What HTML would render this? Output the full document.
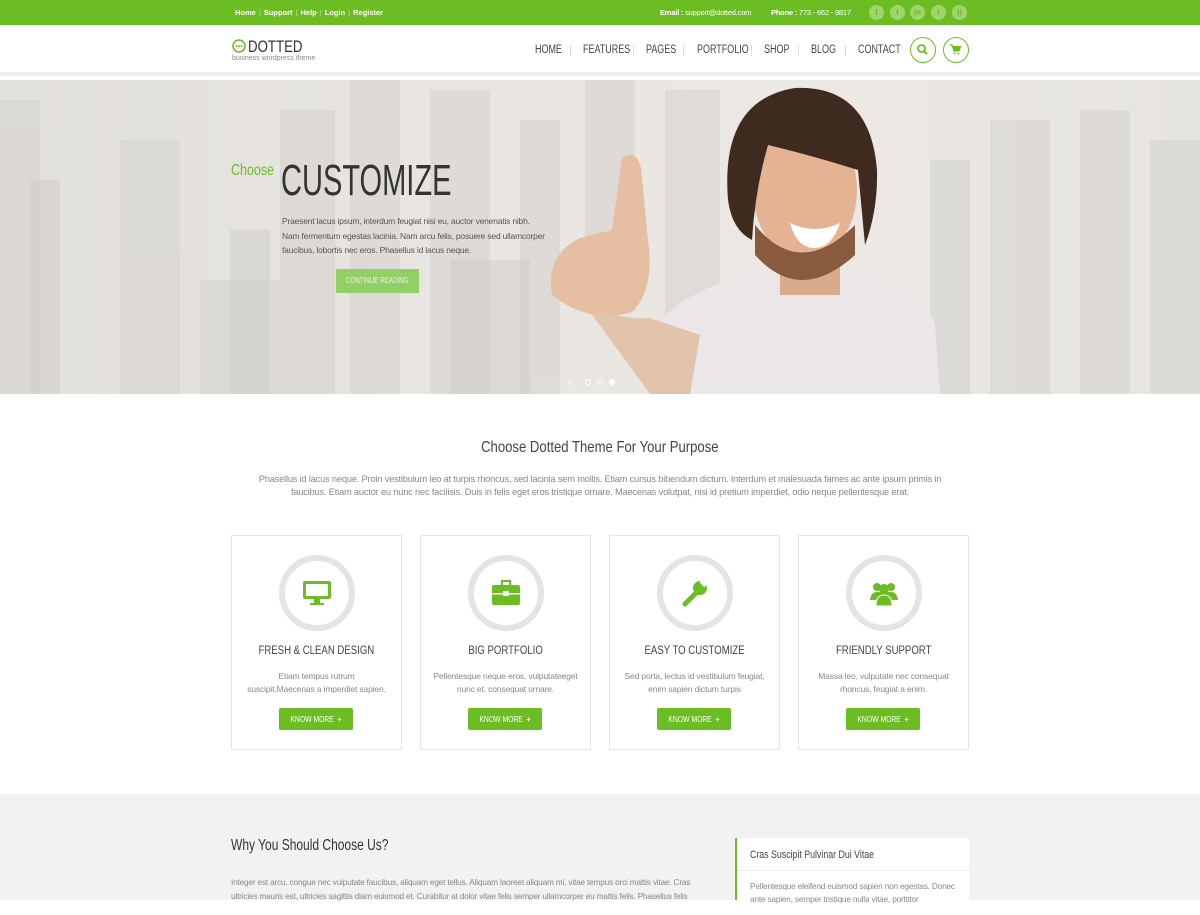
<!DOCTYPE html>
<html><head><meta charset="utf-8"><style>
*{margin:0;padding:0;box-sizing:border-box}
body{width:1200px;height:900px;overflow:hidden;background:#fff;font-family:"Liberation Sans",sans-serif;color:#777}
.top{height:25px;background:#6cbd23;color:#fff;font-size:7.5px;font-weight:bold;position:relative}
.top .l{position:absolute;left:235px;top:8px}
.top .l span{color:#b7e08f;margin:0 3px;font-weight:normal}
.top .r{position:absolute;top:8px;white-space:nowrap;letter-spacing:-0.2px}
.soc{position:absolute;top:5px;width:15px;height:15px;border-radius:50%;background:#9fd56b;color:#6cbd23;font-size:8px;text-align:center;line-height:15px}
.hdr{height:51px;position:relative;border-bottom:4px solid #eeeeee}
.logo{position:absolute;left:232px;top:12px}
.logo b{font-size:17px;color:#333;font-weight:normal;transform:scaleX(.78);display:inline-block;transform-origin:left;margin-left:2px}
.nv{position:absolute;top:19px;font-size:11.5px;color:#444;white-space:nowrap;transform:scaleX(.78);transform-origin:left}
.sep{position:absolute;top:20px;width:1px;height:11px;background:#ddd}
.cbtn{position:absolute;top:12px;width:26px;height:26px;border:1.5px solid #6cbd23;border-radius:50%}
.hero{position:absolute;top:80px;left:0;width:1200px;height:314px;overflow:hidden;background:linear-gradient(90deg,#e2e0dc,#e9e6e2 40%,#ece8e3 70%,#e6e4e1)}
.sec{position:absolute}
.card{position:absolute;top:535px;width:171px;height:215px;border:1px solid #e6e6e6;text-align:center}
.circ{position:absolute;left:47px;top:19px;width:76px;height:76px;border:6px solid #e4e4e4;border-radius:50%}
.card h4{position:absolute;top:107px;width:100%;font-weight:normal;font-size:12px;color:#444}
.card h4 span{display:inline-block;transform:scaleX(.8);white-space:nowrap}
.card p{position:absolute;top:134px;left:12px;right:12px;font-size:8.5px;line-height:13px;color:#888;letter-spacing:-0.15px}
.kb{position:absolute;left:47px;top:172px;width:74px;height:22px;background:#6cbd23;border-radius:2px;color:#fff;font-size:8.5px;line-height:22px;white-space:nowrap}
.kb span{display:inline-block;transform:scaleX(.8)}
</style></head><body>
<div class="top">
<div class="l">Home<span>|</span>Support<span>|</span>Help<span>|</span>Login<span>|</span>Register</div>
<div class="r" style="left:660px">Email : <span style="font-weight:normal">support@dotted.com</span></div>
<div class="r" style="left:771px">Phone : <span style="font-weight:normal">773 - 662 - 9817</span></div>
<div class="soc" style="left:869px">f</div><div class="soc" style="left:890px">t</div><div class="soc" style="left:910px">in</div><div class="soc" style="left:931px">t</div><div class="soc" style="left:952px">))</div>
</div>
<div class="hdr">
<div class="logo"><svg width="14" height="14" style="vertical-align:-1px"><circle cx="7" cy="7" r="6" fill="none" stroke="#6cbd23" stroke-width="1.6"/><circle cx="4.5" cy="7" r="1" fill="#6cbd23"/><circle cx="7" cy="7" r="1" fill="#6cbd23"/><circle cx="9.5" cy="7" r="1" fill="#6cbd23"/></svg><b>DOTTED</b><div style="font-size:7px;color:#888;margin-top:-2px">business wordpress theme</div></div>
<div class="nv" style="left:535px">HOME</div><div class="sep" style="left:570px"></div>
<div class="nv" style="left:583px">FEATURES</div><div class="sep" style="left:633px"></div>
<div class="nv" style="left:646px">PAGES</div><div class="sep" style="left:683px"></div>
<div class="nv" style="left:697px">PORTFOLIO</div><div class="sep" style="left:751px"></div>
<div class="nv" style="left:764px">SHOP</div><div class="sep" style="left:798px"></div>
<div class="nv" style="left:811px">BLOG</div><div class="sep" style="left:845px"></div>
<div class="nv" style="left:858px">CONTACT</div>
<div class="cbtn" style="left:910px"><svg width="23" height="23"><circle cx="10.5" cy="10.5" r="3.5" fill="none" stroke="#6cbd23" stroke-width="1.8"/><path d="M13 13l3 3" stroke="#6cbd23" stroke-width="2"/></svg></div>
<div class="cbtn" style="left:943px"><svg width="23" height="23"><path d="M6 7h2l2 6h5l1.5-4.5H9" fill="#6cbd23" stroke="#6cbd23" stroke-width="1.2"/><circle cx="10.5" cy="15.5" r="1" fill="#6cbd23"/><circle cx="14.5" cy="15.5" r="1" fill="#6cbd23"/></svg></div>
</div>
<div class="hero">
<svg width="1200" height="314" style="position:absolute;left:0;top:0">
<g fill="#d6d3cf" opacity=".55">
<rect x="0" y="20" width="40" height="294"/><rect x="120" y="60" width="60" height="254"/><rect x="280" y="30" width="55" height="284"/><rect x="350" y="0" width="50" height="314"/><rect x="430" y="10" width="60" height="304"/><rect x="520" y="40" width="40" height="274"/><rect x="585" y="0" width="50" height="200"/><rect x="665" y="10" width="55" height="230"/><rect x="990" y="40" width="60" height="274"/><rect x="1080" y="30" width="50" height="284"/><rect x="1150" y="60" width="50" height="254"/><rect x="200" y="200" width="90" height="114"/></g>
<g fill="#ccc9c5" opacity=".45"><rect x="30" y="100" width="30" height="214"/><rect x="230" y="150" width="40" height="164"/><rect x="450" y="180" width="80" height="134"/><rect x="930" y="80" width="40" height="234"/></g>
<path d="M655 314 L665 235 Q700 205 750 195 L865 195 Q925 210 935 245 L940 314Z" fill="#ebe6e8"/>
<path d="M585 225 Q620 240 650 238 L700 255 L690 314 L650 314Z" fill="#e2c4ad"/>
<path d="M552 215 Q545 175 580 158 L612 150 L622 78 Q636 68 641 88 L648 160 Q655 210 632 232 Q590 245 552 215Z" fill="#e6bea1"/>
<rect x="780" y="170" width="60" height="45" fill="#d9ab8c"/>
<ellipse cx="805" cy="110" rx="52" ry="70" fill="#e3b393"/>
<path d="M755 145 Q800 200 855 145 L855 175 Q800 225 755 175Z" fill="#8a5a3e"/>
<path d="M728 120 Q720 20 795 8 Q870 5 877 90 Q878 130 865 165 L858 90 Q810 75 768 65 Q755 110 752 160 Q732 150 728 120Z" fill="#3f2a1f"/>
<path d="M790 143 Q815 155 840 143 Q832 168 814 168 Q797 168 790 143Z" fill="#fff"/>
<text x="568" y="306" font-size="11" fill="#fff">›</text>
<circle cx="588" cy="302" r="2.5" fill="none" stroke="#fff"/><circle cx="600" cy="302" r="2.5" fill="none" stroke="#fff"/><circle cx="612" cy="302" r="2.5" fill="#fff" stroke="#fff"/>
</svg>
<div class="sec" style="left:231px;top:82px;font-size:16px;color:#6cbd23;transform:scaleX(.78);transform-origin:left">Choose</div>
<div class="sec" style="left:281px;top:76px;font-size:44px;color:#333;transform:scaleX(.66);transform-origin:left;white-space:nowrap">CUSTOMIZE</div>
<div class="sec" style="left:282px;top:134px;font-size:8.5px;line-height:14.5px;color:#555;width:265px;letter-spacing:-0.2px">Praesent lacus ipsum, interdum feugiat nisi eu, auctor venenatis nibh. Nam fermentum egestas lacinia. Nam arcu felis, posuere sed ullamcorper faucibus, lobortis nec eros. Phasellus id lacus neque.</div>
<div class="sec" style="left:336px;top:189px;width:83px;height:24px;background:#93cf66;color:#e9f6dd;font-size:8px;text-align:center;line-height:24px;white-space:nowrap"><span style="display:inline-block;transform:scaleX(.78)">CONTINUE READING</span></div>
</div>
<div class="sec" style="left:0;width:1200px;top:439px;text-align:center;font-size:16px;color:#444"><span style="display:inline-block;transform:scaleX(.82)">Choose Dotted Theme For Your Purpose</span></div>
<div class="sec" style="left:240px;width:720px;top:473px;text-align:center;font-size:9.3px;line-height:13px;color:#888;letter-spacing:-0.2px">Phasellus id lacus neque. Proin vestibulum leo at turpis rhoncus, sed lacinia sem mollis. Etiam cursus bibendum dictum. Interdum et malesuada fames ac ante ipsum primis in faucibus. Etiam auctor eu nunc nec facilisis. Duis in felis eget eros tristique ornare. Maecenas volutpat, nisi id pretium imperdiet, odio neque pellentesque erat.</div>

<div class="card" style="left:231px"><div class="circ"></div><svg style="position:absolute;left:70px;top:42px" width="30" height="30"><rect x="1" y="3" width="28" height="18" rx="2" fill="#6cbd23"/><rect x="4" y="6" width="22" height="12" fill="#fff"/><rect x="12" y="21" width="6" height="4" fill="#6cbd23"/><rect x="8" y="25" width="14" height="2" fill="#6cbd23"/></svg><h4><span>FRESH &amp; CLEAN DESIGN</span></h4><p>Etiam tempus rutrum suscipit.Maecenas a imperdiet sapien.</p><div class="kb"><span>KNOW MORE &nbsp;<b>+</b></span></div></div>
<div class="card" style="left:420px"><div class="circ"></div><svg style="position:absolute;left:70px;top:42px" width="30" height="30"><rect x="11" y="3" width="8" height="5" fill="none" stroke="#6cbd23" stroke-width="2"/><rect x="1" y="7" width="28" height="20" rx="2" fill="#6cbd23"/><rect x="1" y="15" width="28" height="1.5" fill="#fff"/><rect x="12" y="13" width="6" height="5" fill="#fff"/></svg><h4><span>BIG PORTFOLIO</span></h4><p>Pellentesque neque eros, vulputateeget nunc et, consequat ornare.</p><div class="kb"><span>KNOW MORE &nbsp;<b>+</b></span></div></div>
<div class="card" style="left:609px"><div class="circ"></div><svg style="position:absolute;left:70px;top:42px" width="30" height="30"><path d="M5 26 L17 14" stroke="#6cbd23" stroke-width="5" stroke-linecap="round"/><circle cx="20" cy="10" r="7" fill="#6cbd23"/><rect x="20" y="2" width="7" height="5" fill="#fff" transform="rotate(45 23 5)"/></svg><h4><span>EASY TO CUSTOMIZE</span></h4><p>Sed porta, lectus id vestibulum feugiat, enim sapien dictum turpis</p><div class="kb"><span>KNOW MORE &nbsp;<b>+</b></span></div></div>
<div class="card" style="left:798px"><div class="circ"></div><svg style="position:absolute;left:70px;top:42px" width="30" height="30"><circle cx="8" cy="9" r="4" fill="#6cbd23"/><circle cx="22" cy="9" r="4" fill="#6cbd23"/><circle cx="15" cy="11" r="5" fill="#6cbd23"/><path d="M1 22 Q2 14 8 14 L22 14 Q28 14 29 22Z" fill="#6cbd23"/><path d="M7 28 Q7 17 15 17 Q23 17 23 28Z" fill="#6cbd23" stroke="#fff"/></svg><h4><span>FRIENDLY SUPPORT</span></h4><p>Massa leo, vulputate nec consequat rhoncus, feugiat a enim.</p><div class="kb"><span>KNOW MORE &nbsp;<b>+</b></span></div></div>

<div class="sec" style="left:0;top:794px;width:1200px;height:106px;background:#f2f2f2"></div>
<div class="sec" style="left:231px;top:837px;font-size:16px;color:#333;transform:scaleX(.75);transform-origin:left;white-space:nowrap">Why You Should Choose Us?</div>
<div class="sec" style="left:231px;top:875px;width:480px;font-size:8.3px;line-height:14px;color:#888;letter-spacing:-0.2px">Integer est arcu, congue nec vulputate faucibus, aliquam eget tellus. Aliquam laoreet aliquam mi, vitae tempus orci mattis vitae. Cras ultricies mauris est, ultricies sagittis diam euismod et. Curabitur at dolor vitae felis semper ullamcorper eu mattis felis. Phasellus felis</div>
<div class="sec" style="left:735px;top:838px;width:234px;height:62px;background:#fff;border-left:2px solid #6cbd23">
<div style="padding:11px 0 0 13px;font-size:11px;color:#444;height:33px;border-bottom:1px solid #eee;white-space:nowrap"><span style="display:inline-block;transform:scaleX(.8);transform-origin:left">Cras Suscipit Pulvinar Dui Vitae</span></div>
<div style="padding:9px 13px;font-size:8.3px;line-height:13px;color:#888;letter-spacing:-0.2px">Pellentesque eleifend euismod sapien non egestas. Donec ante sapien, semper tristique nulla vitae, porttitor</div>
</div>
</body></html>
